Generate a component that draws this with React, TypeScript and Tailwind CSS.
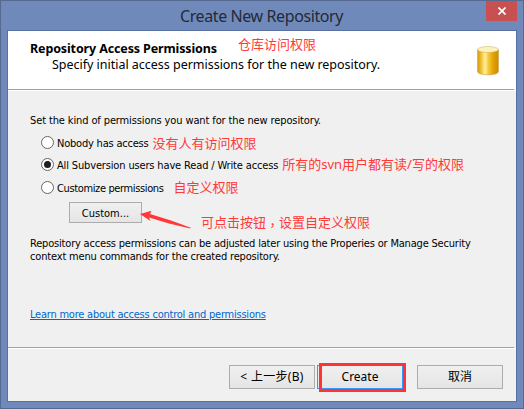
import type { ReactNode } from "react";

function Note({ className, children }: { className: string; children: ReactNode }) {
  return (
    <span className={`whitespace-nowrap font-['Noto_Sans','Noto_Sans_CJK_SC',sans-serif] text-[13px] leading-4 text-[#ff3838] ${className}`}>
      {children}
    </span>
  );
}

function Radio({ label, labelClass, checked }: { label: string; labelClass: string; checked?: boolean }) {
  return (
    <label className="flex items-center gap-[3px]">
      <span className="flex size-[13px] items-center justify-center rounded-full border border-[#666] bg-white">
        {checked && <span className="size-[7px] rounded-full bg-[#1e1e1e]" />}
      </span>
      <span className={`whitespace-nowrap pt-px ${labelClass}`}>{label}</span>
    </label>
  );
}

function Button({ className, children }: { className: string; children: ReactNode }) {
  return (
    <button className={`flex shrink-0 items-center justify-center whitespace-nowrap border bg-linear-to-b from-[#f0f0f0] to-[#e5e5e5] ${className}`}>
      {children}
    </button>
  );
}

function Database() {
  return (
    <svg className="h-[30px] w-[22px]" viewBox="0 0 22 30">
      <defs>
        <linearGradient id="side">
          <stop offset="0" stopColor="#d99a10" />
          <stop offset="0.16" stopColor="#f0bd2c" />
          <stop offset="0.36" stopColor="#fff0a0" />
          <stop offset="0.52" stopColor="#f5c938" />
          <stop offset="0.75" stopColor="#e5a006" />
          <stop offset="1" stopColor="#d08c00" />
        </linearGradient>
      </defs>
      <path d="M.6 3.500v22C.6 27.500 5 28.800 11 28.800s10.400-1.300 10.400-3.300v-22z" fill="url(#side)" stroke="#b98f2a" strokeWidth=".5" />
      <ellipse cx="11" cy="3.500" rx="10.400" ry="3" fill="#fbf2bd" stroke="#c9ac55" strokeWidth=".5" />
    </svg>
  );
}

export default function App() {
  return (
    <div className="flex h-[409px] w-[524px] flex-col border border-[#56698f] bg-[#6f89bb] px-1.5 pb-1.5 font-['DejaVu_Sans_Condensed','Noto_Sans_CJK_SC',sans-serif] text-[11px] leading-[13px] text-black">
      <header className="relative flex h-[29px] shrink-0 items-center justify-center">
        <h1 className="-ml-px whitespace-nowrap font-['Noto_Sans',sans-serif] text-base tracking-[-0.400px] text-[#252a33]">
          Create New Repository
        </h1>
        <button className="absolute top-0 right-0 flex h-5 w-[31px] items-center justify-center bg-[#c75050]">
          <svg className="size-2" viewBox="0 0 8 8" stroke="#fff" strokeWidth="1.700">
            <path d="M.5.5l7 7M7.500.5l-7 7" />
          </svg>
        </button>
      </header>

      <main className="flex min-h-0 flex-1 flex-col border border-[#5a70a0] bg-[#f0f0f0]">
        <section className="flex h-[58px] shrink-0 justify-between bg-white pr-[17px] pl-[22px]">
          <div className="pt-2.5 font-['Noto_Sans',sans-serif] text-[12.500px] leading-[15px]">
            <div className="flex items-start gap-[21px]">
              <h2 className="whitespace-nowrap font-bold tracking-[-0.130px]">Repository Access Permissions</h2>
              <Note className="-mt-[5px]">仓库访问权限</Note>
            </div>
            <p className="mt-px ml-[22px] whitespace-nowrap tracking-[-0.020px]">Specify initial access permissions for the new repository.</p>
          </div>
          <div className="pt-[15px]">
            <Database />
          </div>
        </section>
        <div className="mr-0.5 h-px shrink-0 bg-[#a0a0a0]" />

        <section className="flex h-[257px] shrink-0 flex-col border-t border-white px-[22px] pt-[23px]">
          <p className="whitespace-nowrap tracking-[-0.120px]">Set the kind of permissions you want for the new repository.</p>
          <div className="mt-[7px] ml-[11px] flex h-[17px] items-center gap-1">
            <Radio label="Nobody has access" labelClass="tracking-[-0.210px]" />
            <Note className="">没有人有访问权限</Note>
          </div>
          <div className="mt-[5px] ml-[11px] flex h-[17px] items-center gap-1">
            <Radio label="All Subversion users have Read / Write access" labelClass="tracking-[-0.150px]" checked />
            <Note className="-mt-px">所有的svn用户都有读/写的权限</Note>
          </div>
          <div className="mt-1.5 ml-[11px] flex h-[17px] items-center gap-2.5">
            <Radio label="Customize permissions" labelClass="tracking-[-0.370px]" />
            <Note className="-mt-px">自定义权限</Note>
          </div>
          <div className="mt-1.5 ml-[39px] flex h-[21px]">
            <Button className="w-[73px] border-[#acacac] pt-0.5">Custom...</Button>
            <svg className="-ml-0.5 mt-2 h-5 w-[54px]" viewBox="0 0 54 20" fill="#ff3838">
              <path d="M0 4L11.500.8L10 4L31 10.500L51.500 18L49 18.300L29 13.500L9 7.500L10.500 11z" />
            </svg>
            <Note className="mt-3 ml-[7px]">
              可点击按钮<span lang="zh-TW" className="align-[-3px] font-['Noto_Sans_CJK_TC',sans-serif] leading-none">，</span>设置自定义权限
            </Note>
          </div>
          <div className="mt-3.5 whitespace-nowrap">
            <p className="tracking-[-0.190px]">Repository access permissions can be adjusted later using the Properies or Manage Security</p>
            <p className="tracking-[-0.170px]">context menu commands for the created repository.</p>
          </div>
          <a className="mt-[45px] self-start whitespace-nowrap tracking-[-0.220px] text-[#0066cc] underline underline-offset-1">
            Learn more about access control and permissions
          </a>
        </section>

        <div className="mr-0.5 h-px shrink-0 bg-[#a0a0a0]" />
        <footer className="flex min-h-0 flex-1 items-start border-t border-white pl-[221px] font-['Noto_Sans','Noto_Sans_CJK_SC',sans-serif] text-xs">
          <Button className="mt-4 h-6 w-[86px] border-[#acacac] tracking-[0.300px]">&lt; 上一步(B)</Button>
          <div className="relative mt-4 ml-0.5">
            <Button className="h-6 w-[86px] border-[#3399ff]">Create</Button>
            <span className="absolute -top-0.5 left-0.5 h-[29px] w-[87px] border-3 border-[#ff3333]" />
          </div>
          <Button className="mt-4 ml-3.5 h-6 w-[86px] border-[#acacac]">取消</Button>
        </footer>
      </main>
    </div>
  );
}
